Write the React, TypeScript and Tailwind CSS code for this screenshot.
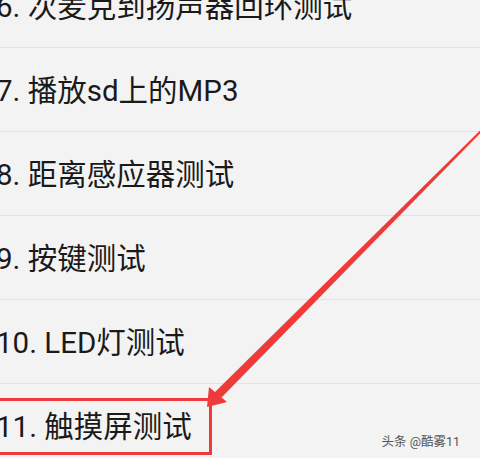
const items = [
  "6. 次麦克到扬声器回环测试",
  "7. 播放sd上的MP3",
  "8. 距离感应器测试",
  "9. 按键测试",
  "10. LED灯测试",
  "11. 触摸屏测试",
];

export default function App() {
  return (
    <div className="relative h-[458px] w-[480px] overflow-hidden bg-[#f3f3f3] font-['Roboto','Noto_Sans_CJK_SC',sans-serif]">
      <div className="mt-[-36px] flex flex-col">
        {items.map((label, idx) => (
          <div
            key={label}
            className={
              idx < items.length - 1
                ? "flex h-[84px] items-center border-b border-[#e2e2e2]"
                : "flex h-[84px] items-center"
            }
          >
            <span className="ml-[-4px] mt-[4px] whitespace-nowrap text-[29.5px] leading-none text-[#1a1a1a]">
              {label}
            </span>
          </div>
        ))}
      </div>

      {/* highlight box */}
      <div className="absolute left-[-4px] top-[398px] h-[57px] w-[216px] border-[3px] border-[#ef3a3a]" />

      {/* arrow */}
      <svg className="absolute inset-0" width="480" height="458" viewBox="0 0 480 458">
        <polygon
          points="482.7,130.7 481.3,129.3 214.5,392.5 221.5,397.5"
          fill="#ef3a3a"
        />
        <polygon points="207,407 209,387 227,402" fill="#ef3a3a" />
      </svg>

      <div className="absolute right-[20px] top-[436px] text-[12.5px] leading-none text-[#555]">
        头条 @酷雾11
      </div>
    </div>
  );
}
